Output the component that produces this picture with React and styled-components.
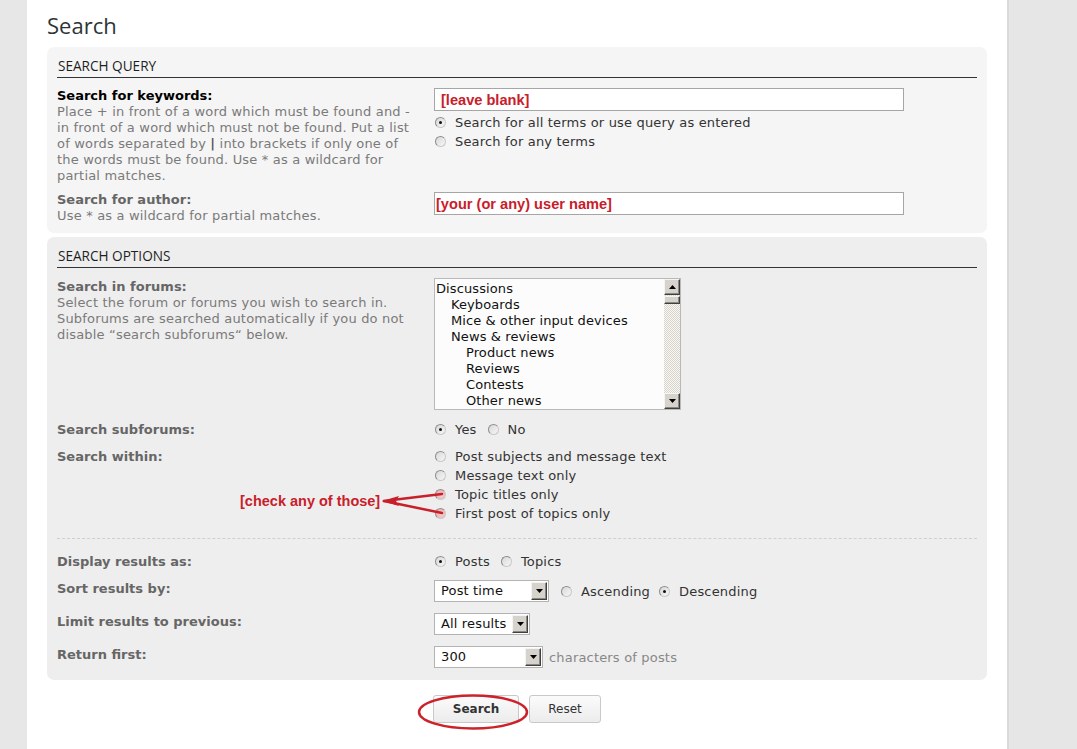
import React from 'react';
import styled, { createGlobalStyle } from 'styled-components';

const Global = createGlobalStyle`
  html, body { margin: 0; padding: 0; background: #e6e6e6; }
  body { font-family: "DejaVu Sans", Verdana, sans-serif; font-size: 13px; color: #333; }
  * { box-sizing: border-box; }
`;

const Page = styled.div`
  display: flex;
  min-height: 749px;
`;

const Gutter = styled.div`
  flex: none;
  width: 27px;
  background: #e7e7e7;
`;

const Main = styled.main`
  flex: none;
  width: 982px;
  min-height: 749px;
  background: #fff;
  border-right: 2px solid #dadada;
  padding: 0 20px 26px 20px;
`;

const Title = styled.h2`
  margin: 0 0 7px;
  padding-top: 10px;
  font-family: "Open Sans", sans-serif;
  font-weight: 400;
  font-size: 22px;
  line-height: 30px;
  color: #2e3436;
`;

const Panel = styled.section`
  position: relative;
  background: ${(p) => p.$bg};
  border-radius: 7px;
  padding: 10px 10px ${(p) => p.$pb}px;
  margin-bottom: 4px;
`;

const Legend = styled.h3`
  margin: 0;
  font-family: "Open Sans", sans-serif;
  font-weight: 400;
  font-size: 13.6px;
  line-height: 18px;
  padding: 0 0 2px 1px;
  color: #1e1e1e;
  border-bottom: 1px solid #333;
  text-transform: uppercase;
`;

const Row = styled.div`
  display: grid;
  grid-template-columns: 377px 1fr;
  align-items: start;
  margin-top: ${(p) => p.$mt}px;
`;

const Term = styled.div`
  line-height: 16px;
  padding: ${(p) => p.$pt || 0}px 10px 0 0;
`;

const Label = styled.div`
  font-weight: 700;
  color: ${(p) => (p.$dark ? '#000' : '#666')};
`;

const Desc = styled.div`
  color: #7a7a7a;
  letter-spacing: 0.18px;
`;

const Pipe = styled.b`
  color: #555;
`;

const Field = styled.div`
  display: flex;
  flex-direction: column;
  align-items: flex-start;
`;

const TextInput = styled.input`
  width: 470px;
  height: 23px;
  border: 1px solid #a6a6a6;
  background: #fff;
  padding: 0 0 0 ${(p) => p.$pad}px;
  font-family: "Liberation Sans", Arial, sans-serif;
  font-weight: 700;
  font-size: 14.6px;
  color: #c8202a;
  outline: none;
`;

const RadioList = styled.div`
  display: flex;
  flex-direction: column;
  margin-top: ${(p) => p.$mt || 0}px;
`;

const RadioLine = styled.label`
  display: flex;
  align-items: center;
  height: 19px;
  line-height: 19px;
  color: #333;
  letter-spacing: 0.18px;
`;

const Inline = styled.div`
  display: flex;
  align-items: center;
  height: ${(p) => p.$h || 19}px;
`;

const RadioDot = styled.span`
  flex: none;
  position: relative;
  width: 11px;
  height: 11px;
  margin: 0 9px 0 1px;
  border-radius: 50%;
  border: 1px solid #8d8d8d;
  border-right-color: #c9c9c9;
  border-bottom-color: #c9c9c9;
  background: ${(p) => (p.$hit ? 'radial-gradient(circle at 60% 60%, #f4d0d0, #e7a7a7)' : 'linear-gradient(135deg, #d8d8d8, #f7f7f7)')};
  &::after {
    content: '';
    display: ${(p) => (p.$on ? 'block' : 'none')};
    position: absolute;
    left: 3px;
    top: 3px;
    width: 3px;
    height: 3px;
    border-radius: 50%;
    background: #111;
  }
`;

const Gap = styled.span`
  display: inline-block;
  width: ${(p) => p.$w}px;
`;

const ListBox = styled.div`
  display: flex;
  width: 247px;
  height: 132px;
  border: 1px solid #b9b9b9;
  background: #fcfcfc;
`;

const ListItems = styled.div`
  flex: 1;
  padding: 2px 0 0 1px;
  line-height: 16px;
  color: #111;
  letter-spacing: 0.1px;
  overflow: hidden;
`;

const ListItem = styled.div`
  padding-left: ${(p) => p.$level * 15}px;
  white-space: nowrap;
`;

const ScrollBar = styled.div`
  flex: none;
  width: 16px;
  display: flex;
  flex-direction: column;
  background-color: #f1efe9;
  background-image: repeating-conic-gradient(#d8d5cd 0 25%, #f7f6f2 0 50%);
  background-size: 2px 2px;
`;

const BevelBtn = styled.div`
  flex: none;
  width: 16px;
  height: ${(p) => p.$h || 16}px;
  display: flex;
  align-items: center;
  justify-content: center;
  background: #d6d3cc;
  border: 1px solid;
  border-color: #f4f4f4 #404040 #404040 #f4f4f4;
  box-shadow: inset -1px -1px 0 #8a8882;
`;

const Thumb = styled(BevelBtn)`
  height: 8px;
  margin-top: 1px;
`;

const Track = styled.div`
  flex: 1;
`;

const Combo = styled.div`
  display: flex;
  align-items: center;
  width: ${(p) => p.$w}px;
  height: 22px;
  border: 1px solid #b3b3b3;
  background: #fff;
  padding: 1px;
  color: #111;
`;

const ComboText = styled.span`
  flex: 1;
  padding-left: 5px;
  line-height: 18px;
  white-space: nowrap;
  letter-spacing: 0.15px;
`;

const Muted = styled.span`
  color: #888;
  margin-left: 6px;
  letter-spacing: 0.18px;
`;

const Separator = styled.div`
  margin-top: 15px;
  border-top: 1px dashed #cfcfcf;
`;

const Actions = styled.div`
  display: flex;
  justify-content: center;
  gap: 10px;
  margin-top: 15px;
`;

const Button = styled.button`
  position: relative;
  width: ${(p) => p.$w}px;
  height: 28px;
  border: 1px solid #c9c9c9;
  border-radius: 3px;
  background: linear-gradient(#fbfbfb, #ececec);
  font-family: "DejaVu Sans", Verdana, sans-serif;
  font-size: 12px;
  font-weight: ${(p) => (p.$bold ? 700 : 400)};
  color: #333;
  padding: 0;
`;

const Overlay = styled.svg`
  position: absolute;
  left: ${(p) => p.$x}px;
  top: ${(p) => p.$y}px;
  overflow: visible;
  pointer-events: none;
`;

const Note = styled.span`
  position: absolute;
  left: 193px;
  top: 256px;
  font-family: "Liberation Sans", Arial, sans-serif;
  font-weight: 700;
  font-size: 14.5px;
  line-height: 16px;
  color: #c8202a;
  white-space: nowrap;
`;

const Arrow = ({ dir }) => (
  <svg width="7" height="4" viewBox="0 0 7 4">
    {dir === 'up' ? <path d="M0 4 L3.5 0 L7 4Z" fill="#000" /> : <path d="M0 0 L7 0 L3.5 4Z" fill="#000" />}
  </svg>
);

const Radio = ({ on, hit, children }) => (
  <RadioLine>
    <RadioDot $on={on} $hit={hit} />
    {children}
  </RadioLine>
);

const Select = ({ w, children }) => (
  <Combo $w={w}>
    <ComboText>{children}</ComboText>
    <BevelBtn $h={18}>
      <Arrow dir="down" />
    </BevelBtn>
  </Combo>
);

const forums = [
  ['Discussions', 0],
  ['Keyboards', 1],
  ['Mice & other input devices', 1],
  ['News & reviews', 1],
  ['Product news', 2],
  ['Reviews', 2],
  ['Contests', 2],
  ['Other news', 2],
];

export default function App() {
  return (
    <>
      <Global />
      <Page>
        <Gutter />
        <Main>
          <Title>Search</Title>

          <Panel $bg="#f5f5f5" $pb={9}>
            <Legend>Search query</Legend>
            <Row $mt={10}>
              <Term>
                <Label $dark>Search for keywords:</Label>
                <Desc>
                  Place + in front of a word which must be found and - in front of a word which must not be found. Put a list of words separated by <Pipe>|</Pipe> into brackets if only one of the words must be found. Use * as a wildcard for partial matches.
                </Desc>
              </Term>
              <Field>
                <TextInput $pad={6} readOnly value="[leave blank]" />
                <RadioList $mt={2}>
                  <Radio on>Search for all terms or use query as entered</Radio>
                  <Radio>Search for any terms</Radio>
                </RadioList>
              </Field>
            </Row>
            <Row $mt={8}>
              <Term>
                <Label>Search for author:</Label>
                <Desc>Use * as a wildcard for partial matches.</Desc>
              </Term>
              <Field>
                <TextInput $pad={1} readOnly value="[your (or any) user name]" />
              </Field>
            </Row>
          </Panel>

          <Panel $bg="#eeeeee" $pb={12}>
            <Legend>Search options</Legend>
            <Row $mt={10}>
              <Term $pt={1}>
                <Label>Search in forums:</Label>
                <Desc>
                  Select the forum or forums you wish to search in. Subforums are searched automatically if you do not disable “search subforums“ below.
                </Desc>
              </Term>
              <Field>
                <ListBox>
                  <ListItems>
                    {forums.map(([name, level]) => (
                      <ListItem key={name} $level={level}>{name}</ListItem>
                    ))}
                  </ListItems>
                  <ScrollBar>
                    <BevelBtn><Arrow dir="up" /></BevelBtn>
                    <Thumb />
                    <Track />
                    <BevelBtn><Arrow dir="down" /></BevelBtn>
                  </ScrollBar>
                </ListBox>
              </Field>
            </Row>
            <Row $mt={10}>
              <Term $pt={2}>
                <Label>Search subforums:</Label>
              </Term>
              <Inline>
                <Radio on>Yes</Radio>
                <Gap $w={10} />
                <Radio>No</Radio>
              </Inline>
            </Row>
            <Row $mt={8}>
              <Term $pt={2}>
                <Label>Search within:</Label>
              </Term>
              <RadioList>
                <Radio>Post subjects and message text</Radio>
                <Radio>Message text only</Radio>
                <Radio hit>Topic titles only</Radio>
                <Radio hit>First post of topics only</Radio>
              </RadioList>
            </Row>
            <Separator />
            <Row $mt={13}>
              <Term $pt={2}>
                <Label>Display results as:</Label>
              </Term>
              <Inline>
                <Radio on>Posts</Radio>
                <Gap $w={10} />
                <Radio>Topics</Radio>
              </Inline>
            </Row>
            <Row $mt={9}>
              <Term $pt={1}>
                <Label>Sort results by:</Label>
              </Term>
              <Inline $h={22}>
                <Select w={115}>Post time</Select>
                <Gap $w={11} />
                <Radio>Ascending</Radio>
                <Gap $w={8} />
                <Radio on>Descending</Radio>
              </Inline>
            </Row>
            <Row $mt={11}>
              <Term $pt={1}>
                <Label>Limit results to previous:</Label>
              </Term>
              <Inline $h={22}>
                <Select w={96}>All results</Select>
              </Inline>
            </Row>
            <Row $mt={11}>
              <Term $pt={1}>
                <Label>Return first:</Label>
              </Term>
              <Inline $h={22}>
                <Select w={109}>300</Select>
                <Muted>characters of posts</Muted>
              </Inline>
            </Row>

            <Note>[check any of those]</Note>
            <Overlay $x={0} $y={0} width="1" height="1">
              <g stroke="#c8202a" strokeWidth="2.5" strokeLinecap="round" fill="none">
                <line x1="337" y1="264" x2="395" y2="257" />
                <line x1="337" y1="264" x2="395" y2="276" />
              </g>
              <path d="M335 264 L352 259 L349 264 L352 269 Z" fill="#c8202a" />
            </Overlay>
          </Panel>

          <Actions>
            <Button $w={86} $bold>
              Search
              <Overlay $x={-16} $y={-2} width="112" height="37">
                <ellipse cx="55" cy="18" rx="54" ry="16.5" fill="none" stroke="#cc2229" strokeWidth="2.5" />
              </Overlay>
            </Button>
            <Button $w={72}>Reset</Button>
          </Actions>
        </Main>
      </Page>
    </>
  );
}
